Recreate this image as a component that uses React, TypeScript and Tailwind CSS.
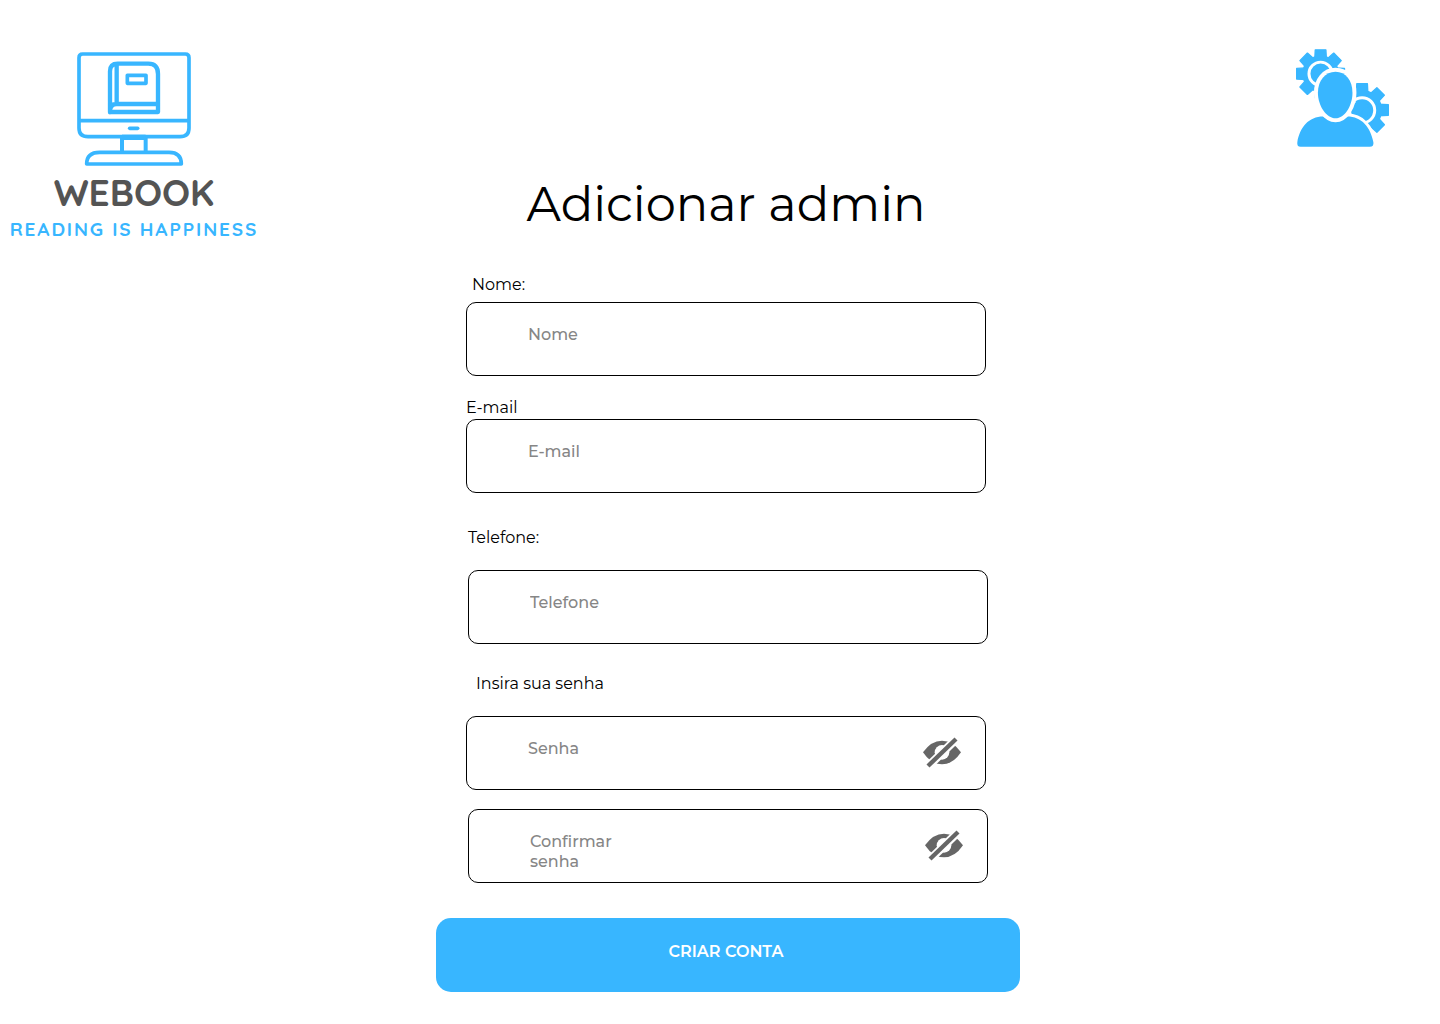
import React, { useState } from "react";

const inputClass =
  "peer block h-[74px] w-full rounded-[10px] border border-black bg-white pt-0 pr-16 pb-2.5 pl-[61px] text-base leading-5 font-medium text-gray-700 placeholder:text-[#868686] outline-none focus:border-[#38b6ff]";

function Logo() {
  return (
    <a href="#" aria-label="Webook" className="flex w-[250px] flex-col items-center">
      <svg viewBox="0 0 342 342" className="h-[114px] w-[114px]" fill="none" stroke="#38b6ff" strokeWidth="11" strokeLinejoin="round">
        <path d="M17 6H325Q336 6 336 17V228Q336 254 309 254H33Q6 254 6 228V17Q6 6 17 6Z" />
        <path d="M5 206H337" />
        <path d="M158 229H182" strokeLinecap="round" />
        <path d="M135 256V300M206 256V300" strokeWidth="12" />
        <path d="M135 256H206" strokeWidth="16" />
        <path d="M29 336Q29 301 68 301H276Q313 301 313 336Z" />
        <path d="M99 181V58Q99 35 122 35H214Q243 35 243 66V180H99ZM119 37V156M99 177Q99 156 119 156H243" strokeWidth="13" />
        <rect x="151" y="70" width="56" height="24" strokeWidth="11" />
      </svg>
      <span className="mt-[3px] font-[Quicksand,Lato,sans-serif] text-[37px] leading-[46px] font-bold text-[#545454]">WEBOOK</span>
      <span className="mt-0.5 font-[Quicksand,Lato,sans-serif] text-[19px] leading-6 font-bold tracking-widest whitespace-nowrap text-[#38b6ff]">
        READING IS HAPPINESS
      </span>
    </a>
  );
}

function Gear({ cx, cy, r }: { cx: number; cy: number; r: number }) {
  return (
    <g transform={`translate(${cx} ${cy})`} stroke="#38b6ff" strokeWidth="4" strokeLinejoin="round">
      <circle r={r * 0.72} />
      {[0, 45, 90, 135, 180, 225, 270, 315].map((a) => (
        <path key={a} d={`M-20 0L-16 ${2 - r}H16L20 0Z`} transform={`rotate(${a})`} />
      ))}
    </g>
  );
}

function AdminIcon() {
  return (
    <svg viewBox="48 27 280 294" className="h-[98px] w-[93px]" fill="#38b6ff">
      <clipPath id="gear-back">
        <path d="M40 20H200V90H140V140H106V180H40Z" />
      </clipPath>
      <clipPath id="gear-front">
        <path d="M228 120H335V290H270L200 240V190H228Z" />
      </clipPath>
      <g clipPath="url(#gear-back)">
        <Gear cx={122} cy={101} r={74} />
      </g>
      <circle cx="122" cy="101" r="35" fill="none" stroke="#fff" strokeWidth="9" />
      <g clipPath="url(#gear-front)">
        <Gear cx={247} cy={210} r={81} />
      </g>
      <circle cx="247" cy="211" r="38" fill="none" stroke="#fff" strokeWidth="9" />
      <path
        d="M62 321Q50 321 52 307C60 262 86 230 130 230Q166 258 202 230C246 230 272 262 281 307Q283 321 270 321Z"
        stroke="#fff"
        strokeWidth="18"
        paintOrder="stroke"
      />
      <path
        d="M167 95C198 95 218 122 218 158C218 198 194 235 167 235C140 235 114 198 114 158C114 122 136 95 167 95Z"
        stroke="#fff"
        strokeWidth="24"
        paintOrder="stroke"
      />
    </svg>
  );
}

function EyeOff() {
  return (
    <svg viewBox="0 0 114 93" className="h-[31px] w-[38px]" aria-hidden="true">
      <path d="M0 46Q24 11 57 11Q90 11 114 46Q90 82 57 82Q24 82 0 46Z" fill="#666" />
      <circle cx="57" cy="46" r="22" fill="#fff" />
      <path d="M8 95L106 0" stroke="#fff" strokeWidth="25" />
      <path d="M15 87L99 6" stroke="#666" strokeWidth="13" />
    </svg>
  );
}

function PasswordToggle({ shown, onToggle }: { shown: boolean; onToggle: () => void }) {
  return (
    <button
      type="button"
      onClick={onToggle}
      aria-pressed={shown}
      aria-label="Mostrar senha"
      className="absolute top-[21px] right-[25px] cursor-pointer"
    >
      <EyeOff />
    </button>
  );
}

export default function App() {
  const [showPassword, setShowPassword] = useState(false);
  const [showConfirm, setShowConfirm] = useState(false);

  return (
    <div className="grid min-h-screen grid-cols-[1fr_auto_1fr] items-start bg-white font-[Montserrat,Inter,sans-serif] text-black">
      <header className="pt-[52px] pl-[9px]">
        <Logo />
      </header>

      <main className="ml-4 w-[584px] pt-[174px] pb-8">
        <h1 className="pr-1 text-center text-5xl leading-[60px] font-normal">Adicionar admin</h1>

        <form onSubmit={(e) => e.preventDefault()} className="mt-[41px] text-base leading-5">
          <div className="mr-[34px] ml-[30px]">
            <label htmlFor="nome" className="block pl-1.5">Nome:</label>
            <input id="nome" type="text" placeholder="Nome" className={`${inputClass} mt-[7px]`} />
          </div>

          <div className="mt-[22px] mr-[34px] ml-[30px]">
            <label htmlFor="email" className="block">E-mail</label>
            <input id="email" type="email" placeholder="E-mail" className={`${inputClass} mt-px`} />
          </div>

          <div className="mx-8 mt-[35px]">
            <label htmlFor="telefone" className="block">Telefone:</label>
            <input id="telefone" type="tel" placeholder="Telefone" className={`${inputClass} mt-[22px]`} />
          </div>

          <div className="mt-[30px] mr-[34px] ml-[30px]">
            <label htmlFor="senha" className="block pl-2.5">Insira sua senha</label>
            <div className="relative mt-[22px]">
              <input id="senha" type={showPassword ? "text" : "password"} placeholder="Senha" className={inputClass} />
              <PasswordToggle shown={showPassword} onToggle={() => setShowPassword(!showPassword)} />
            </div>
          </div>

          <div className="relative mx-8 mt-[19px]">
            <input id="confirmar" type={showConfirm ? "text" : "password"} placeholder=" " className={inputClass} />
            <label
              htmlFor="confirmar"
              className="absolute top-[23px] left-[62px] hidden w-[100px] font-medium text-[#868686] peer-placeholder-shown:block"
            >
              Confirmar senha
            </label>
            <PasswordToggle shown={showConfirm} onToggle={() => setShowConfirm(!showConfirm)} />
          </div>

          <button
            type="submit"
            className="mt-[35px] block h-[74px] w-full cursor-pointer rounded-[15px] bg-[#38b6ff] pr-1 pb-1.5 font-semibold text-white"
          >
            CRIAR CONTA
          </button>
        </form>
      </main>

      <div className="flex justify-end pt-[49px] pr-[51px]">
        <a href="#" aria-label="Administração">
          <AdminIcon />
        </a>
      </div>
    </div>
  );
}
